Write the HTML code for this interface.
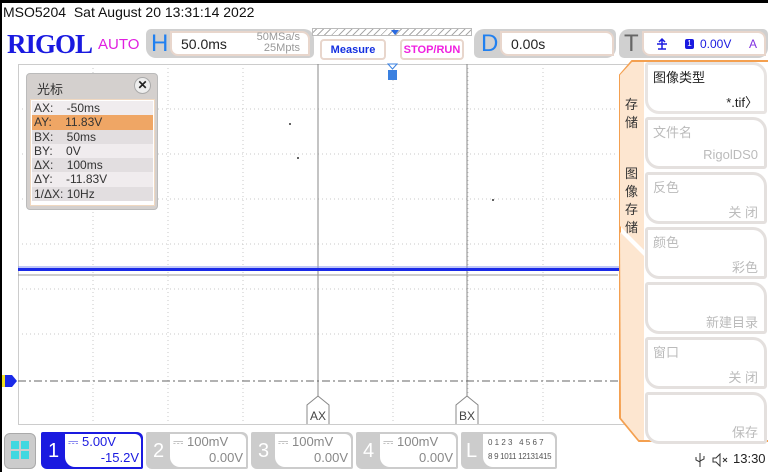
<!DOCTYPE html>
<html><head><meta charset="utf-8"><style>
*{margin:0;padding:0;box-sizing:border-box}
body{width:768px;height:472px;background:#fff;position:relative;overflow:hidden;font-family:"Liberation Sans","Noto Sans CJK SC",sans-serif;color:#222}
.a{position:absolute}
.cap{border:2px solid #d8d8d8;border-radius:0 8px 0 8px;background:#fff}
.mb{position:absolute;left:645px;width:122px;height:52px;border:3px solid #e4e0de;border-radius:3px 14px 3px 14px;background:#fff;font-size:13px;color:#bbb}
.mb .t{position:absolute;left:5px;top:2px}
.mb .v{position:absolute;right:6px;top:27px}
.row{height:14.3px;line-height:14.3px;font-size:12px;padding-left:2px;color:#333}
</style></head><body>
<div class="a" style="left:0;top:0;width:768px;height:3px;background:#000"></div>
<div class="a" style="left:0;top:0;width:2px;height:472px;background:#000"></div>
<div class="a" style="left:3px;top:4px;font-size:14px;color:#111">MSO5204&nbsp; Sat August 20 13:31:14 2022</div>
<div class="a" style="left:7px;top:29px;font-family:'Liberation Serif',serif;font-weight:bold;font-size:27px;color:#1a1ae0;letter-spacing:-1px">RIGOL</div>
<div class="a" style="left:98px;top:36px;font-size:15px;color:#e020e0">AUTO</div>
<div class="a" style="left:146px;top:29px;width:168px;height:29px;background:#d0d0d0;border-radius:5px 10px 5px 10px"></div>
<div class="a" style="left:151px;top:30px;font-size:24px;color:#2080f0">H</div>
<div class="a cap" style="left:170px;top:31px;width:140px;height:25px;border-color:#e8d6cc"></div>
<div class="a" style="left:181px;top:36px;font-size:14px">50.0ms</div>
<div class="a" style="left:250px;top:32px;font-size:11px;color:#999;text-align:right;width:50px;line-height:11px">50MSa/s<br>25Mpts</div>
<div class="a" style="left:312px;top:28px;width:160px;height:8px;border:1px solid #bbb;background:repeating-linear-gradient(135deg,#fff 0 2px,#aaa 2px 3px,#fff 3px 5px)"></div>
<div class="a" style="left:391px;top:30px;width:0;height:0;border:4px solid transparent;border-top:5px solid #2a6ae0"></div>
<div class="a" style="left:320px;top:39px;width:66px;height:21px;border:2px solid #e8d6cc;border-radius:4px;background:#fff;font-size:11px;font-weight:bold;color:#1530e0;text-align:center;line-height:18px">Measure</div>
<div class="a" style="left:400px;top:39px;width:64px;height:21px;border:2px solid #e8d6cc;border-radius:4px;background:#fff;font-size:11px;font-weight:bold;color:#f020e0;text-align:center;line-height:18px">STOP/RUN</div>
<div class="a" style="left:474px;top:29px;width:142px;height:29px;background:#d0d0d0;border-radius:10px 5px 10px 5px"></div>
<div class="a" style="left:481px;top:30px;font-size:24px;color:#2080f0">D</div>
<div class="a cap" style="left:500px;top:31px;width:114px;height:25px;border-color:#e8d6cc"></div>
<div class="a" style="left:511px;top:36px;font-size:14px">0.00s</div>
<div class="a" style="left:619px;top:29px;width:149px;height:29px;background:#d0d0d0;border-radius:10px 5px 10px 5px"></div>
<div class="a" style="left:624px;top:30px;font-size:24px;color:#666">T</div>
<div class="a cap" style="left:642px;top:31px;width:124px;height:25px;border-color:#e8d6cc"></div>
<svg class="a" style="left:655px;top:37px" width="14" height="14"><path d="M2 7H12M7 2V12M4 5L7 2L10 5M3 12H11" stroke="#1a1ae0" stroke-width="1.5" fill="none"/></svg>
<div class="a" style="left:685px;top:39px;width:9px;height:10px;background:#1a1ae0;border-radius:2px;color:#fff;font-size:8px;text-align:center;line-height:10px">1</div>
<div class="a" style="left:700px;top:37px;font-size:12px;color:#1a1ae0">0.00V</div>
<div class="a" style="left:749px;top:37px;font-size:12px;color:#8030e0">A</div>
<svg class="a" style="left:0;top:0" width="768" height="472">
<g stroke="#c8c8c8" stroke-dasharray="1 3" stroke-width="1">
<line x1="93" y1="64" x2="93" y2="424"/><line x1="168" y1="64" x2="168" y2="424"/><line x1="243" y1="64" x2="243" y2="424"/><line x1="393" y1="64" x2="393" y2="424"/><line x1="468" y1="64" x2="468" y2="424"/><line x1="543" y1="64" x2="543" y2="424"/>
<line x1="18" y1="109" x2="618" y2="109"/><line x1="18" y1="154" x2="618" y2="154"/><line x1="18" y1="199" x2="618" y2="199"/><line x1="18" y1="244" x2="618" y2="244"/><line x1="18" y1="289" x2="618" y2="289"/><line x1="18" y1="334" x2="618" y2="334"/>
</g>
<rect x="18.5" y="64.5" width="620" height="360" fill="none" stroke="#ccc"/>
<line x1="318" y1="64" x2="318" y2="405" stroke="#888"/>
<line x1="467" y1="64" x2="467" y2="405" stroke="#888"/>
<line x1="18" y1="275" x2="618" y2="275" stroke="#999"/>
<line x1="18" y1="381" x2="618" y2="381" stroke="#666" stroke-dasharray="8 3 2 3"/>
<rect x="18" y="268" width="620" height="3" fill="#1a2ae8"/>
<rect x="18" y="266" width="620" height="2" fill="#8090f0" opacity=".5"/>
<path d="M307 424V405L318 396L329 405V424" fill="#fff" stroke="#888"/>
<path d="M456 424V405L467 396L478 405V424" fill="#fff" stroke="#888"/>
<text x="310" y="420" font-size="12" fill="#444" font-family="Liberation Sans">AX</text>
<text x="459" y="420" font-size="12" fill="#444" font-family="Liberation Sans">BX</text>
<path d="M388 64h9l-4.5 5z" fill="#fff" stroke="#3a80e0"/>
<rect x="388" y="70" width="9" height="10" fill="#3a80e0"/>
<path d="M2 375h10l5 6l-5 6h-10z" fill="#1a2ae8"/><rect x="2" y="375" width="3" height="12" fill="#f0e020"/>
<circle cx="290" cy="124" r="1" fill="#333"/><circle cx="298" cy="158" r="1" fill="#333"/><circle cx="493" cy="200" r="1" fill="#333"/>
</svg>
<div class="a" style="left:26px;top:73px;width:132px;height:137px;background:#d4d0ce;border:1px solid #bbb;border-radius:4px"></div>
<div class="a" style="left:37px;top:79px;font-size:13px;color:#333">光标</div>
<div class="a" style="left:134px;top:77px;width:17px;height:17px;border-radius:50%;background:#eee;border:1px solid #aaa;font-size:12px;font-weight:bold;text-align:center;line-height:15px">✕</div>
<div class="a" style="left:30px;top:99px;width:125px;height:107px;background:#fff;border:1px solid #f0d8c0;padding:1px">
<div class="row" style="background:#f0ecee">AX:&nbsp;&nbsp;&nbsp; -50ms</div>
<div class="row" style="background:#efa665">AY:&nbsp;&nbsp;&nbsp; 11.83V</div>
<div class="row" style="background:#e2dee0">BX:&nbsp;&nbsp;&nbsp; 50ms</div>
<div class="row" style="background:#f0ecee">BY:&nbsp;&nbsp;&nbsp; 0V</div>
<div class="row" style="background:#e2dee0">ΔX:&nbsp;&nbsp;&nbsp; 100ms</div>
<div class="row" style="background:#f0ecee">ΔY:&nbsp;&nbsp;&nbsp; -11.83V</div>
<div class="row" style="background:#e2dee0">1/ΔX: 10Hz</div>
</div>
<svg class="a" style="left:0;top:0" width="768" height="472">
<path d="M768 61H632L620 75V418L639 441H768" fill="#fff" stroke="#f4a050" stroke-width="2"/>
<path d="M632 62H644V250L620 226V75Z" fill="#fde6d0"/>
<path d="M620 232L644 256V440H639L621 418Z" fill="#fde6d0"/>
</svg>
<div class="a" style="left:625px;top:96px;font-size:13px;line-height:18px;width:14px;color:#333">存储</div>
<div class="a" style="left:625px;top:165px;font-size:13px;line-height:18px;width:14px;color:#333">图像存储</div>
<div class="mb" style="top:62px;border-color:#e8e4e2"><span class="t" style="color:#222">图像类型</span><span class="v" style="color:#222">*.tif〉</span></div>
<div class="mb" style="top:117px"><span class="t">文件名</span><span class="v">RigolDS0</span></div>
<div class="mb" style="top:172px"><span class="t">反色</span><span class="v">关 闭</span></div>
<div class="mb" style="top:227px"><span class="t">颜色</span><span class="v">彩色</span></div>
<div class="mb" style="top:282px"><span class="v">新建目录</span></div>
<div class="mb" style="top:337px"><span class="t">窗口</span><span class="v">关 闭</span></div>
<div class="mb" style="top:392px"><span class="v">保存</span></div>
<div class="a" style="left:4px;top:433px;width:32px;height:36px;background:#ccc;border-radius:6px;border:1px solid #aaa"></div>
<div class="a" style="left:11px;top:441px;width:8px;height:8px;background:#40d8e0"></div><div class="a" style="left:21px;top:441px;width:8px;height:8px;background:#40d8e0"></div>
<div class="a" style="left:11px;top:451px;width:8px;height:8px;background:#40d8e0"></div><div class="a" style="left:21px;top:451px;width:8px;height:8px;background:#40d8e0"></div>
<div class="a" style="left:41px;top:432px;width:102px;height:37px;background:#1a1ae0;border-radius:2px 6px 2px 6px"></div>
<div class="a" style="left:48px;top:440px;font-size:20px;color:#fff">1</div>
<div class="a" style="left:65px;top:434px;width:76px;height:33px;background:#fff;border-radius:0 6px 0 10px"></div>
<div class="a" style="left:68px;top:434px;font-size:13px;color:#1a1ae0">⎓ 5.00V</div>
<div class="a" style="left:95px;top:450px;font-size:13px;color:#1a1ae0;width:44px;text-align:right">-15.2V</div>
<div class="a" style="left:146px;top:432px;width:102px;height:37px;background:#ccc;border-radius:2px 6px 2px 6px"></div>
<div class="a" style="left:153px;top:440px;font-size:20px;color:#fff">2</div>
<div class="a" style="left:170px;top:434px;width:76px;height:33px;background:#fff;border-radius:0 6px 0 10px"></div>
<div class="a" style="left:173px;top:434px;font-size:13px;color:#888">⎓ 100mV</div>
<div class="a" style="left:195px;top:450px;font-size:13px;color:#888;width:48px;text-align:right">0.00V</div>
<div class="a" style="left:251px;top:432px;width:102px;height:37px;background:#ccc;border-radius:2px 6px 2px 6px"></div>
<div class="a" style="left:258px;top:440px;font-size:20px;color:#fff">3</div>
<div class="a" style="left:275px;top:434px;width:76px;height:33px;background:#fff;border-radius:0 6px 0 10px"></div>
<div class="a" style="left:278px;top:434px;font-size:13px;color:#888">⎓ 100mV</div>
<div class="a" style="left:300px;top:450px;font-size:13px;color:#888;width:48px;text-align:right">0.00V</div>
<div class="a" style="left:356px;top:432px;width:102px;height:37px;background:#ccc;border-radius:2px 6px 2px 6px"></div>
<div class="a" style="left:363px;top:440px;font-size:20px;color:#fff">4</div>
<div class="a" style="left:380px;top:434px;width:76px;height:33px;background:#fff;border-radius:0 6px 0 10px"></div>
<div class="a" style="left:383px;top:434px;font-size:13px;color:#888">⎓ 100mV</div>
<div class="a" style="left:405px;top:450px;font-size:13px;color:#888;width:48px;text-align:right">0.00V</div>
<div class="a" style="left:461px;top:432px;width:96px;height:37px;background:#ccc;border-radius:2px 6px 2px 6px"></div>
<div class="a" style="left:466px;top:440px;font-size:20px;color:#fff">L</div>
<div class="a" style="left:483px;top:434px;width:72px;height:33px;background:#fff;border-radius:0 6px 0 10px"></div>
<div class="a" style="left:488px;top:438px;font-size:8px;color:#555">0 1 2 3&nbsp;&nbsp; 4 5 6 7</div>
<div class="a" style="left:488px;top:452px;font-size:8px;color:#555;letter-spacing:-0.3px">8 9 1011 12131415</div>
<svg class="a" style="left:694px;top:452px" width="12" height="16"><path d="M6 1V15M2 5V8L6 10M10 4V7L6 9" stroke="#333" fill="none"/></svg>
<svg class="a" style="left:712px;top:453px" width="20" height="14"><path d="M1 5H4L8 1V13L4 9H1Z" stroke="#333" fill="none"/><path d="M11 5L15 9M15 5L11 9" stroke="#333"/></svg>
<div class="a" style="left:733px;top:451px;font-size:13px;color:#222">13:30</div>
</body></html>
